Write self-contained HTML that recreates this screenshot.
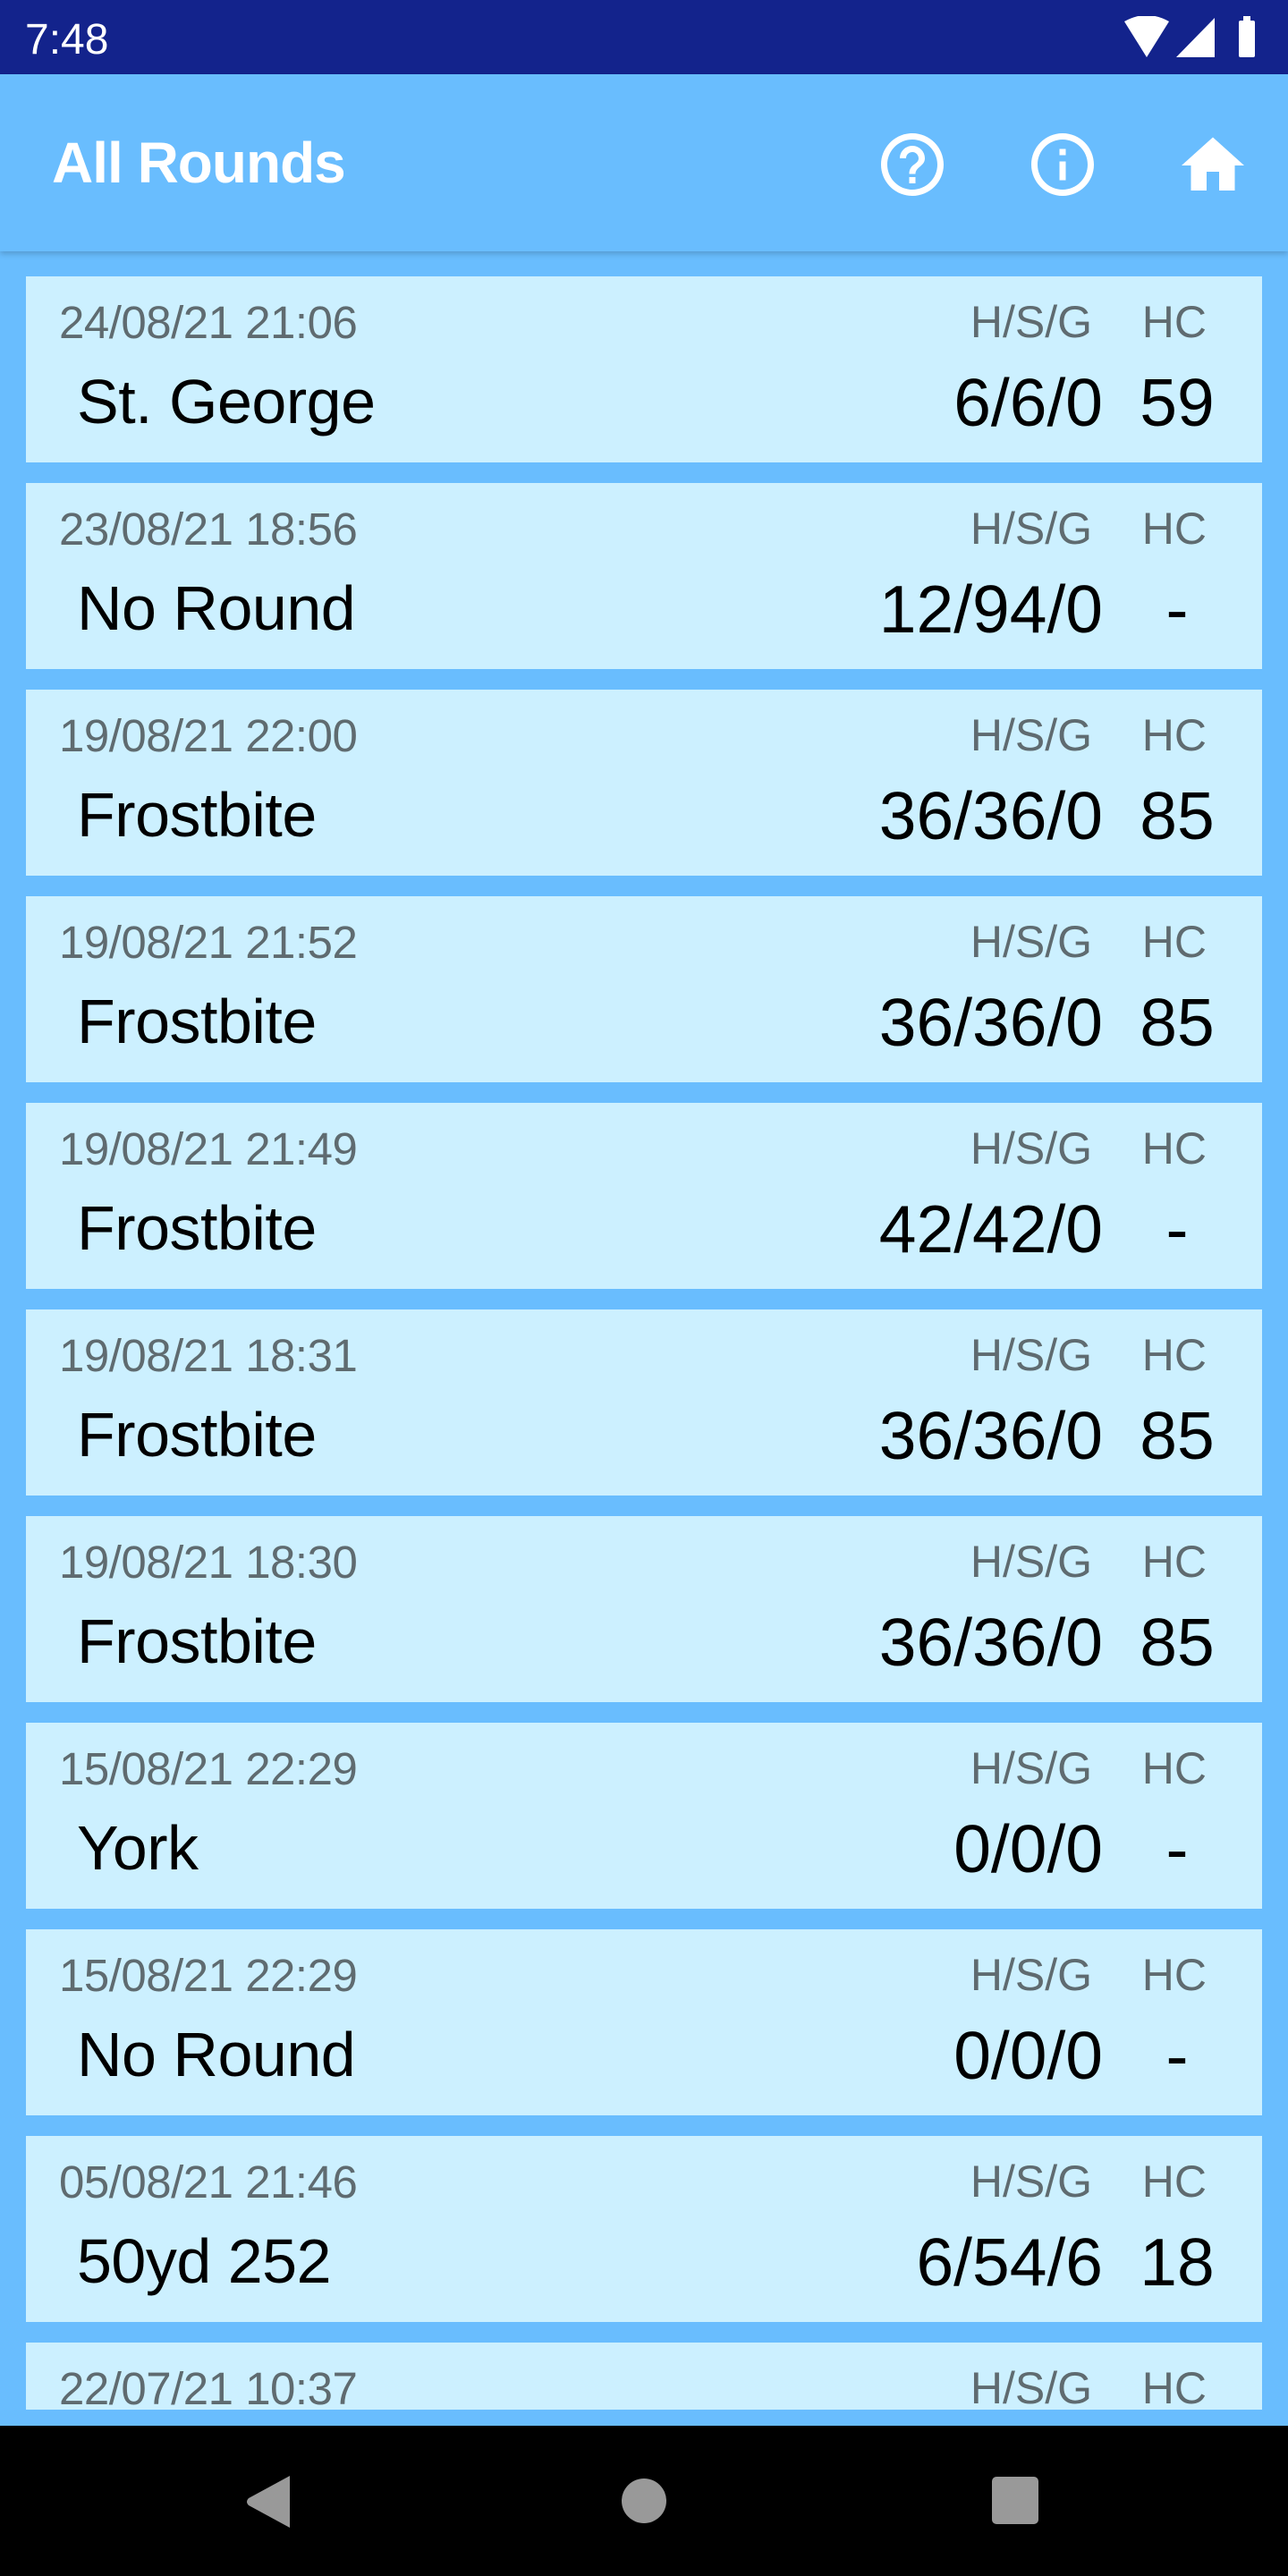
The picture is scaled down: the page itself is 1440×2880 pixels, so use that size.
<!DOCTYPE html>
<html><head><meta charset="utf-8"><style>
*{margin:0;padding:0;box-sizing:border-box}
body{width:1440px;height:2880px;overflow:hidden;background:#69bdfe;font-family:"Liberation Sans",sans-serif;position:relative}
.status{position:absolute;left:0;top:0;width:1440px;height:83px;background:#13238c;color:#fff}
.bar{position:absolute;left:0;top:83px;width:1440px;height:198px;background:#69bdfe;box-shadow:0 3px 6px rgba(0,0,0,0.18)}
.title{position:absolute;left:58px;top:62px;font-size:64px;font-weight:bold;color:#fff;letter-spacing:-1px}
.card{position:absolute;left:29px;width:1382px;height:208px;background:#ccf0ff}
.d{position:absolute;left:37px;top:22px;font-size:51px;color:#5f6b70;letter-spacing:-0.5px}
.l1{position:absolute;right:190px;top:22px;font-size:50px;color:#5f6b70}
.l2{position:absolute;right:62px;top:22px;font-size:50px;color:#5f6b70}
.n{position:absolute;left:57px;top:100px;font-size:70px;color:#000;letter-spacing:-0.5px}
.s{position:absolute;right:178px;top:98px;font-size:75px;color:#000}
.h{position:absolute;right:50px;width:90px;text-align:center;top:98px;font-size:75px;color:#000}
.nav{position:absolute;left:0;top:2712px;width:1440px;height:168px;background:#000}
</style></head><body>
<div class="status">
<div style="position:absolute;left:28px;top:17px;font-size:48px">7:48</div>
<svg style="position:absolute;left:1255px;top:18px" width="160" height="48" viewBox="0 0 160 48">
<path d="M2 6 Q27 -8 52 6 L27 46 Z" fill="#fff"/>
<path d="M103 2 L103 46 L60 46 Z" fill="#fff"/>
<rect x="130" y="5" width="18" height="41" rx="2" fill="#fff"/><rect x="135" y="0" width="8" height="6" fill="#fff"/>
</svg>
</div>
<div class="bar">
<div class="title">All Rounds</div>
<svg style="position:absolute;left:978px;top:59px" width="84" height="84" viewBox="0 0 24 24"><path fill="#fff" d="M11 18h2v-2h-2v2zm1-16C6.48 2 2 6.48 2 12s4.48 10 10 10 10-4.48 10-10S17.52 2 12 2zm0 18c-4.41 0-8-3.59-8-8s3.59-8 8-8 8 3.590 8 8-3.59 8-8 8zm0-14c-2.210 0-4 1.79-4 4h2c0-1.1.9-2 2-2s2 .9 2 2c0 2-3 1.75-3 5h2c0-2.25 3-2.5 3-5 0-2.21-1.790-4-4-4z"/></svg>
<svg style="position:absolute;left:1146px;top:59px" width="84" height="84" viewBox="0 0 24 24"><path fill="#fff" d="M11 7h2v2h-2zm0 4h2v6h-2zm1-9C6.48 2 2 6.48 2 12s4.48 10 10 10 10-4.48 10-10S17.52 2 12 2zm0 18c-4.41 0-8-3.59-8-8s3.590-8 8-8 8 3.59 8 8-3.59 8-8 8z"/></svg>
<svg style="position:absolute;left:1314px;top:60px" width="84" height="84" viewBox="0 0 24 24"><path fill="#fff" d="M10 20v-6h4v6h5v-8h3L12 3 2 12h3v8z"/></svg>
</div>

<div class="card" style="top:309px"><div class="d">24/08/21 21:06</div><div class="l1">H/S/G</div><div class="l2">HC</div><div class="n">St. George</div><div class="s">6/6/0</div><div class="h">59</div></div>
<div class="card" style="top:540px"><div class="d">23/08/21 18:56</div><div class="l1">H/S/G</div><div class="l2">HC</div><div class="n">No Round</div><div class="s">12/94/0</div><div class="h">-</div></div>
<div class="card" style="top:771px"><div class="d">19/08/21 22:00</div><div class="l1">H/S/G</div><div class="l2">HC</div><div class="n">Frostbite</div><div class="s">36/36/0</div><div class="h">85</div></div>
<div class="card" style="top:1002px"><div class="d">19/08/21 21:52</div><div class="l1">H/S/G</div><div class="l2">HC</div><div class="n">Frostbite</div><div class="s">36/36/0</div><div class="h">85</div></div>
<div class="card" style="top:1233px"><div class="d">19/08/21 21:49</div><div class="l1">H/S/G</div><div class="l2">HC</div><div class="n">Frostbite</div><div class="s">42/42/0</div><div class="h">-</div></div>
<div class="card" style="top:1464px"><div class="d">19/08/21 18:31</div><div class="l1">H/S/G</div><div class="l2">HC</div><div class="n">Frostbite</div><div class="s">36/36/0</div><div class="h">85</div></div>
<div class="card" style="top:1695px"><div class="d">19/08/21 18:30</div><div class="l1">H/S/G</div><div class="l2">HC</div><div class="n">Frostbite</div><div class="s">36/36/0</div><div class="h">85</div></div>
<div class="card" style="top:1926px"><div class="d">15/08/21 22:29</div><div class="l1">H/S/G</div><div class="l2">HC</div><div class="n">York</div><div class="s">0/0/0</div><div class="h">-</div></div>
<div class="card" style="top:2157px"><div class="d">15/08/21 22:29</div><div class="l1">H/S/G</div><div class="l2">HC</div><div class="n">No Round</div><div class="s">0/0/0</div><div class="h">-</div></div>
<div class="card" style="top:2388px"><div class="d">05/08/21 21:46</div><div class="l1">H/S/G</div><div class="l2">HC</div><div class="n">50yd 252</div><div class="s">6/54/6</div><div class="h">18</div></div>
<div class="card" style="top:2619px;height:75px;overflow:hidden"><div class="d">22/07/21 10:37</div><div class="l1">H/S/G</div><div class="l2">HC</div></div>

<div class="nav">
<svg style="position:absolute;left:274px;top:56px" width="56" height="58" viewBox="0 0 56 58"><path d="M50 0 L50 58 L4 33 Q0 29 4 25 Z" fill="#999"/></svg>
<div style="position:absolute;left:695px;top:59px;width:50px;height:50px;border-radius:50%;background:#999"></div>
<div style="position:absolute;left:1109px;top:57px;width:52px;height:53px;border-radius:5px;background:#999"></div>
</div>
</body></html>
